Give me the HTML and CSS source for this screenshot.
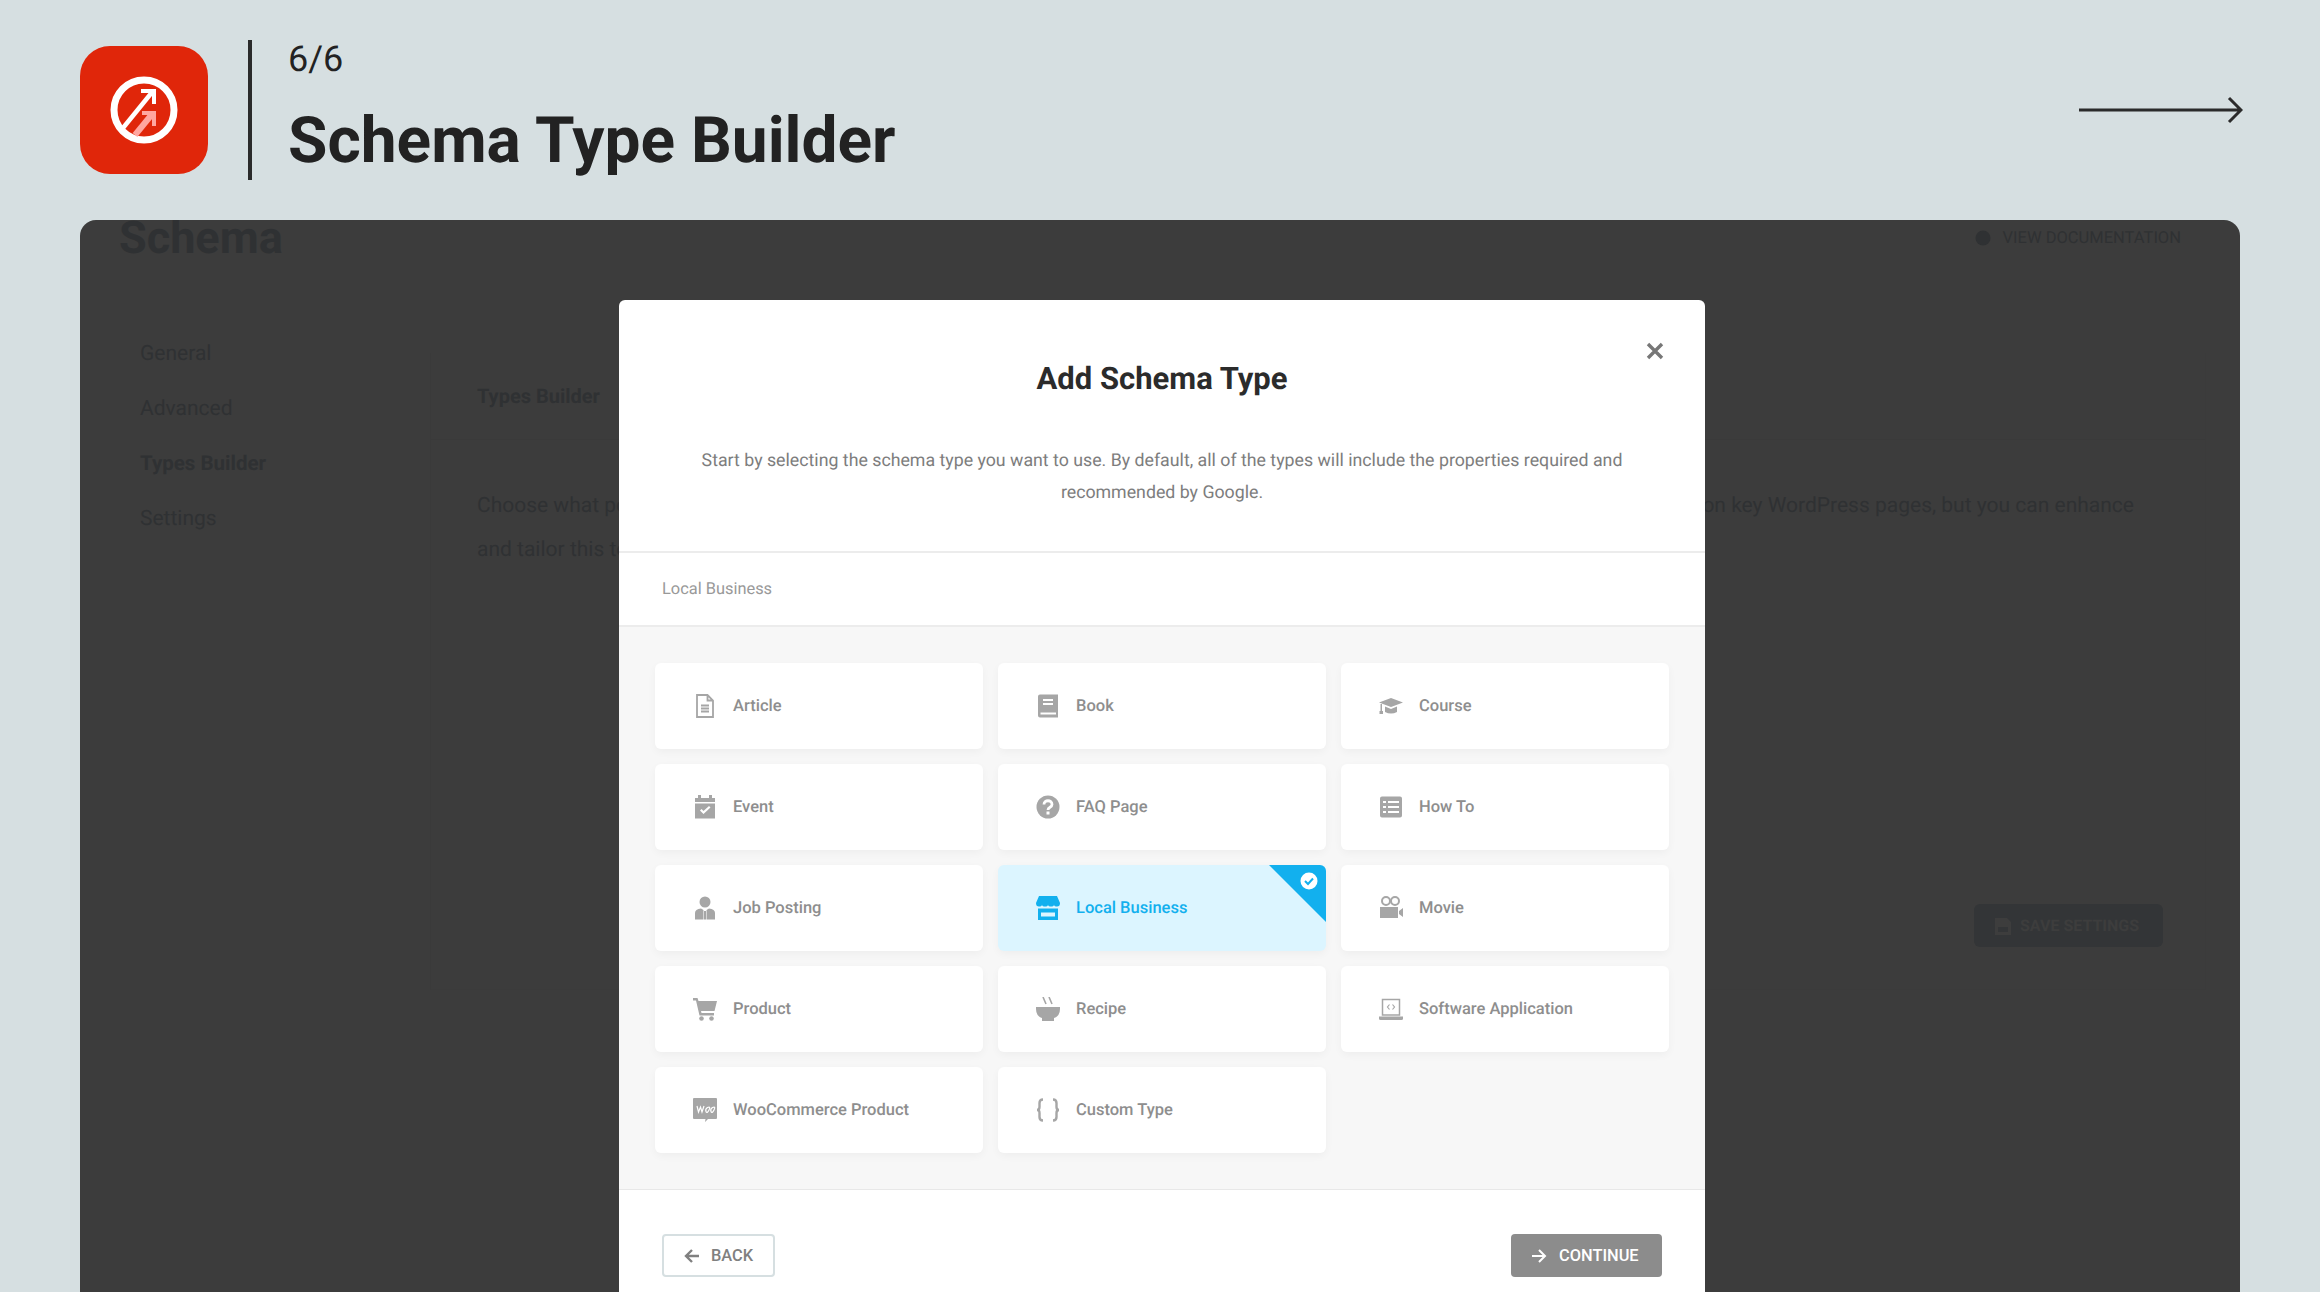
FILE: index.html
```html
<!DOCTYPE html>
<html lang="en">
<head>
<meta charset="utf-8">
<title>Schema Type Builder</title>
<link rel="stylesheet" href="styles.css">
</head>
<body>
<header class="hero">
  <div class="logo">
    <svg viewBox="0 0 128 128" width="128" height="128">
      <circle cx="64" cy="64" r="30" fill="none" stroke="#fff" stroke-width="7"/>
      <path d="M55 89 73 67" stroke="#ffa6a0" stroke-width="6" fill="none"/>
      <path d="M62 67H74V80" stroke="#ffa6a0" stroke-width="4" fill="none"/>
      <path d="M43 82 73 45" stroke="#fff" stroke-width="4.5" fill="none"/>
      <path d="M61 45H74V58" stroke="#fff" stroke-width="4" fill="none"/>
    </svg>
  </div>
  <div class="hero-divider"></div>
  <div class="hero-text">
    <div class="hero-step">6/6</div>
    <h1 class="hero-title">Schema Type Builder</h1>
  </div>
  <svg class="hero-arrow" viewBox="0 0 164 30" width="164" height="30">
    <path d="M0 15H162M150 3 162 15 150 27" fill="none" stroke="#2b2b2b" stroke-width="3"/>
  </svg>
</header>

<main class="panel">
  <div class="bg-top">
    <div class="bg-brand">Schema</div>
    <div class="bg-doc">
      <svg viewBox="0 0 16 16" width="16" height="16"><circle cx="8" cy="8" r="7.5" fill="#2f3133"/></svg>
      <span>VIEW DOCUMENTATION</span>
    </div>
  </div>
  <div class="bg-body">
    <nav class="bg-nav">
      <div class="bg-nav-item">General</div>
      <div class="bg-nav-item">Advanced</div>
      <div class="bg-nav-item is-bold">Types Builder</div>
      <div class="bg-nav-item">Settings</div>
    </nav>
    <section class="bg-main">
      <div class="bg-main-head">Types Builder</div>
      <div class="bg-main-text">
        <div class="bg-line"><span>Choose what post types get schema.</span><span>on key WordPress pages, but you can enhance</span></div>
        <div class="bg-line"><span>and tailor this to your needs.</span></div>
      </div>
      <div class="bg-save">
        <svg viewBox="0 0 16 18" width="16" height="18"><path d="M0 1H12L16 5V18H0ZM3 10V15H13V10Z" fill="#3d3d3d" fill-rule="evenodd"/></svg>
        <span>SAVE SETTINGS</span>
      </div>
    </section>
  </div>

  <div class="modal">
    <button class="modal-close" aria-label="Close">
      <svg viewBox="0 0 18 18" width="18" height="18"><path d="M2 2 16 16M16 2 2 16" stroke="#777" stroke-width="3.4" fill="none"/></svg>
    </button>
    <div class="modal-head">
      <h2 class="modal-title">Add Schema Type</h2>
      <p class="modal-desc">Start by selecting the schema type you want to use. By default, all of the types will include the properties required and recommended by Google.</p>
    </div>
    <div class="modal-search">Local Business</div>
    <div class="modal-grid">
      <div class="type-card">
        <svg class="type-icon" viewBox="0 0 24 24"><path d="M4 1H14.500L20 6.500V23H4ZM14.500 1V6.500H20M8 11.500H16M8 14.500H16M8 17.500H16" fill="none" stroke="#a6a6a6" stroke-width="1.800"/></svg>
        <span>Article</span>
      </div>
      <div class="type-card">
        <svg class="type-icon" viewBox="0 0 24 24"><path d="M2 2.500Q2 .5 4 .5H22V23.500H4Q2 23.500 2 21.500ZM7 5V7H17V5ZM7 9V11H17V9ZM4.500 18.500V20.500H20V18.500Z" fill="#a6a6a6" fill-rule="evenodd"/></svg>
        <span>Book</span>
      </div>
      <div class="type-card">
        <svg class="type-icon" viewBox="0 0 24 24"><path d="M12 4 24 8.500 12 13 0 8.500ZM6 12.500 12 15 18 12.500V18Q12 21 6 18ZM1.500 10H3V17H4V20H.5V17H1.500Z" fill="#a6a6a6"/></svg>
        <span>Course</span>
      </div>
      <div class="type-card">
        <svg class="type-icon" viewBox="0 0 24 24"><path d="M5 0H8V3H16V0H19V3H22V7H2V3H5ZM2 8.500H22V23.500H2ZM7 15.500 10.500 19 17.500 12.500 16 11 10.500 16 8.500 14Z" fill="#a6a6a6" fill-rule="evenodd"/></svg>
        <span>Event</span>
      </div>
      <div class="type-card">
        <svg class="type-icon" viewBox="0 0 24 24"><circle cx="12" cy="12" r="11.500" fill="#a6a6a6"/><path d="M8 9.500C8 4.500 16 4.500 16 9.500 16 12.500 12 12 12 15" fill="none" stroke="#fff" stroke-width="2.800"/><rect x="10.500" y="16.500" width="3" height="3" fill="#fff"/></svg>
        <span>FAQ Page</span>
      </div>
      <div class="type-card">
        <svg class="type-icon" viewBox="0 0 24 24"><path d="M3 1.500H21Q23 1.500 23 3.500V20.500Q23 22.500 21 22.500H3Q1 22.500 1 20.500V3.500Q1 1.500 3 1.500ZM4 6V8H7V6ZM9 6V8H20V6ZM4 11V13H7V11ZM9 11V13H20V11ZM4 16V18H7V16ZM9 16V18H20V16Z" fill="#a6a6a6" fill-rule="evenodd"/></svg>
        <span>How To</span>
      </div>
      <div class="type-card">
        <svg class="type-icon" viewBox="0 0 24 24"><circle cx="12" cy="6" r="5.500" fill="#a6a6a6"/><path d="M2 23.500V17Q2 13 8 12.500L10.500 14 10 23.500ZM22 23.500V17Q22 13 16 12.500L13.500 14 14 23.500ZM11 15H13L13.500 23.500H10.500Z" fill="#a6a6a6"/></svg>
        <span>Job Posting</span>
      </div>
      <div class="type-card is-selected">
        <svg class="type-icon" viewBox="0 0 24 24"><path d="M3 0H21L24 7Q24 10.500 21 10.500 18 10.500 18 8.500 18 10.500 15 10.500 12 10.500 12 8.500 12 10.500 9 10.500 6 10.500 6 8.500 6 10.500 3 10.500 0 10.500 0 7ZM2 12.500H22V24H2ZM5 16.500V20.500H19V16.500Z" fill="#12b0ee" fill-rule="evenodd"/></svg>
        <span>Local Business</span>
        <svg class="type-corner" viewBox="0 0 58 58" width="58" height="58">
          <path d="M1 0H58V57Z" fill="#12b0ee"/>
          <circle cx="41" cy="16" r="8.500" fill="#fff"/>
          <path d="M37 16 40 19 45 13.500" fill="none" stroke="#12b0ee" stroke-width="2"/>
        </svg>
      </div>
      <div class="type-card">
        <svg class="type-icon" viewBox="0 0 24 24"><circle cx="7" cy="5" r="4" fill="none" stroke="#a6a6a6" stroke-width="2"/><circle cx="16" cy="5" r="4" fill="none" stroke="#a6a6a6" stroke-width="2"/><path d="M1 11H19V22H1ZM20 15 24 12V21L20 18Z" fill="#a6a6a6"/></svg>
        <span>Movie</span>
      </div>
      <div class="type-card">
        <svg class="type-icon" viewBox="0 0 24 24"><path d="M0 1H4.500L5.500 4H24L21.500 14H8L8.500 16H21V18.500H6.500L3 3.500H0Z" fill="#a6a6a6"/><circle cx="8.500" cy="21.500" r="2.300" fill="#a6a6a6"/><circle cx="18.500" cy="21.500" r="2.300" fill="#a6a6a6"/></svg>
        <span>Product</span>
      </div>
      <div class="type-card">
        <svg class="type-icon" viewBox="0 0 24 24"><path d="M0 10H24V12Q24 19 18 21V24H6V21Q0 19 0 12Z" fill="#a6a6a6"/><path d="M7 0 10 7M13 0 16 7" fill="none" stroke="#a6a6a6" stroke-width="1.600"/></svg>
        <span>Recipe</span>
      </div>
      <div class="type-card">
        <svg class="type-icon" viewBox="0 0 24 24"><path d="M3.500 2.500H20.500V18H3.500Z" fill="none" stroke="#a6a6a6" stroke-width="1.500"/><path d="M10.500 7.500 8.500 10 10.500 12.500M13.500 7.500 15.500 10 13.500 12.500" fill="none" stroke="#a6a6a6" stroke-width="1.200"/><path d="M0 19.500H24V21.500Q24 23 22.500 23H1.500Q0 23 0 21.500Z" fill="#a6a6a6"/></svg>
        <span>Software Application</span>
      </div>
      <div class="type-card">
        <svg class="type-icon" viewBox="0 0 24 24"><path d="M1 0H23Q24 0 24 1V20Q24 21 23 21H15L12 24 12.500 21H1Q0 21 0 20V1Q0 0 1 0Z" fill="#a6a6a6"/><path d="M4 8 5.500 14 7.500 9 9 14 11 8M14.500 9.500Q12 11 13 13.500T16 12 14.500 9.500ZM19.500 9.500Q17 11 18 13.500T21 12 19.500 9.500Z" fill="none" stroke="#fff" stroke-width="1.200"/></svg>
        <span>WooCommerce Product</span>
      </div>
      <div class="type-card">
        <svg class="type-icon" viewBox="0 0 24 24"><path d="M7 1.500Q3.500 1.500 3.500 5V9Q3.500 12 1 12 3.500 12 3.500 15V19Q3.500 22.500 7 22.500M17 1.500Q20.500 1.500 20.500 5V9Q20.500 12 23 12 20.500 12 20.500 15V19Q20.500 22.500 17 22.500" fill="none" stroke="#a6a6a6" stroke-width="2.400"/></svg>
        <span>Custom Type</span>
      </div>
    </div>
    <div class="modal-foot">
      <button class="btn btn-back">
        <svg viewBox="0 0 16 16" width="16" height="16"><path d="M15 8H2M8 2 2 8 8 14" fill="none" stroke="#808080" stroke-width="2.400"/></svg>
        <span>BACK</span>
      </button>
      <button class="btn btn-next">
        <svg viewBox="0 0 16 16" width="16" height="16"><path d="M1 8H14M8 2 14 8 8 14" fill="none" stroke="#fff" stroke-width="2"/></svg>
        <span>CONTINUE</span>
      </button>
    </div>
  </div>
</main>
</body>
</html>
```
FILE: styles.css
```css
* { box-sizing: border-box; }
html, body {
  margin: 0;
  height: 1292px;
  overflow: hidden;
}
body {
  display: flex;
  flex-direction: column;
  background: #d6dfe1;
  font-family: Roboto, "Liberation Sans", sans-serif;
  text-rendering: geometricPrecision;
}
h1, h2, p { margin: 0; }

/* Hero */
.hero {
  flex: 0 0 220px;
  display: flex;
  align-items: center;
  padding: 0 77px 0 80px;
}
.logo {
  width: 128px;
  height: 128px;
  border-radius: 30px;
  background: #e0260a;
  flex: none;
}
.logo svg { display: block; }
.hero-divider {
  width: 4px;
  height: 140px;
  margin: 0 36px 0 40px;
  background: #2b2b2b;
  flex: none;
}
.hero-text { flex: 1; padding-top: 3px; color: #222; }
.hero-step {
  font-size: 36px;
  line-height: 42px;
  margin-top: -6px;
}
.hero-title {
  font-size: 64px;
  line-height: 76px;
  font-weight: 700;
  margin-top: 23px;
}
.hero-arrow { flex: none; display: block; }

/* Panel */
.panel {
  flex: 1;
  position: relative;
  margin: 0 80px;
  background: #3c3c3c;
  border-radius: 16px 16px 0 0;
  overflow: hidden;
  color: #2f3133;
}
.bg-top {
  height: 36px;
  padding: 0 59px 0 39px;
  display: flex;
  align-items: center;
  justify-content: space-between;
}
.bg-brand {
  font-size: 45px;
  line-height: 34px;
  font-weight: 700;
}
.bg-doc {
  display: flex;
  align-items: center;
  gap: 12px;
  font-size: 16.5px;
}
.bg-body {
  display: flex;
  margin-top: 71px;
}
.bg-nav {
  flex: 0 0 350px;
  padding-left: 60px;
}
.bg-nav-item {
  height: 55px;
  line-height: 55px;
  font-size: 21px;
}
.is-bold { font-weight: 700; font-size: 20.5px; }
.bg-main {
  width: 1776px;
  height: 637px;
  margin-top: 26px;
  display: flex;
  flex-direction: column;
  border-left: 1px solid #3a3a3a;
  border-right: 1px solid #3b3b3b;
  border-bottom: 1px solid #3b3b3b;
  padding-bottom: 42px;
}
.bg-main-head {
  height: 87px;
  padding: 22px 0 0 46px;
  line-height: 42px;
  font-size: 20px;
  font-weight: 700;
  border-bottom: 1px solid #3a3a3a;
}
.bg-main-text {
  padding: 44px 0 0 46px;
  margin-right: 71px;
  font-size: 21px;
  line-height: 44px;
}
.bg-line {
  display: flex;
  justify-content: space-between;
  white-space: nowrap;
}
.bg-save {
  margin: auto 42px 0 auto;
  width: 189px;
  height: 43px;
  background: #333537;
  border-radius: 6px;
  color: #3d3d3d;
  display: flex;
  align-items: center;
  gap: 9px;
  padding-left: 21px;
  font-size: 16px;
  font-weight: 700;
  white-space: nowrap;
}

/* Modal */
.modal {
  position: absolute;
  left: 539px;
  top: 80px;
  width: 1086px;
  background: #fff;
  border-radius: 6px 6px 0 0;
}
.modal-close {
  position: absolute;
  top: 42px;
  right: 41px;
  width: 18px;
  height: 18px;
  padding: 0;
  border: 0;
  background: none;
}
.modal-close svg { display: block; }
.modal-head {
  padding: 59px 36px 42px;
  text-align: center;
  border-bottom: 2px solid #ececec;
}
.modal-title {
  font-size: 31px;
  line-height: 40px;
  font-weight: 700;
  color: #2b2b2b;
}
.modal-desc {
  width: 960px;
  margin: 46px auto 0;
  font-size: 17.75px;
  line-height: 32px;
  color: #7d7d7d;
}
.modal-search {
  height: 74px;
  padding-left: 43px;
  line-height: 73px;
  font-size: 16.4px;
  color: #999;
  border-bottom: 2px solid #ececec;
}
.modal-grid {
  display: grid;
  grid-template-columns: repeat(3, 1fr);
  grid-auto-rows: 86px;
  gap: 15px;
  padding: 36px 36px 36px;
  background: #f7f7f7;
  border-bottom: 1px solid #e8e8e8;
}
.type-card {
  position: relative;
  display: flex;
  align-items: center;
  gap: 16px;
  padding-left: 38px;
  background: #fff;
  border-radius: 6px;
  box-shadow: 0 3px 8px rgba(0, 0, 0, .04);
  font-size: 16.5px;
  font-weight: 500;
  color: #8e8e8e;
}
.type-card span { padding-top: 1px; }
.type-icon { width: 24px; height: 24px; flex: none; }
.type-card.is-selected {
  background: #dcf5ff;
  color: #12b0ee;
}
.type-corner {
  position: absolute;
  top: 0;
  right: 0;
  border-top-right-radius: 6px;
}
.modal-foot {
  display: flex;
  justify-content: space-between;
  padding: 44px 43px 40px;
}
.btn {
  display: flex;
  align-items: center;
  height: 43px;
  border-radius: 4px;
  font-family: inherit;
  font-size: 16.4px;
  font-weight: 500;
}
.btn-back {
  width: 113px;
  gap: 11px;
  padding: 0 0 0 20px;
  background: #fff;
  border: 2px solid #d6dfe1;
  color: #808080;
}
.btn-next {
  width: 151px;
  gap: 12px;
  padding: 0 0 0 20px;
  background: #8c8c8c;
  border: 0;
  color: #fff;
}
```
